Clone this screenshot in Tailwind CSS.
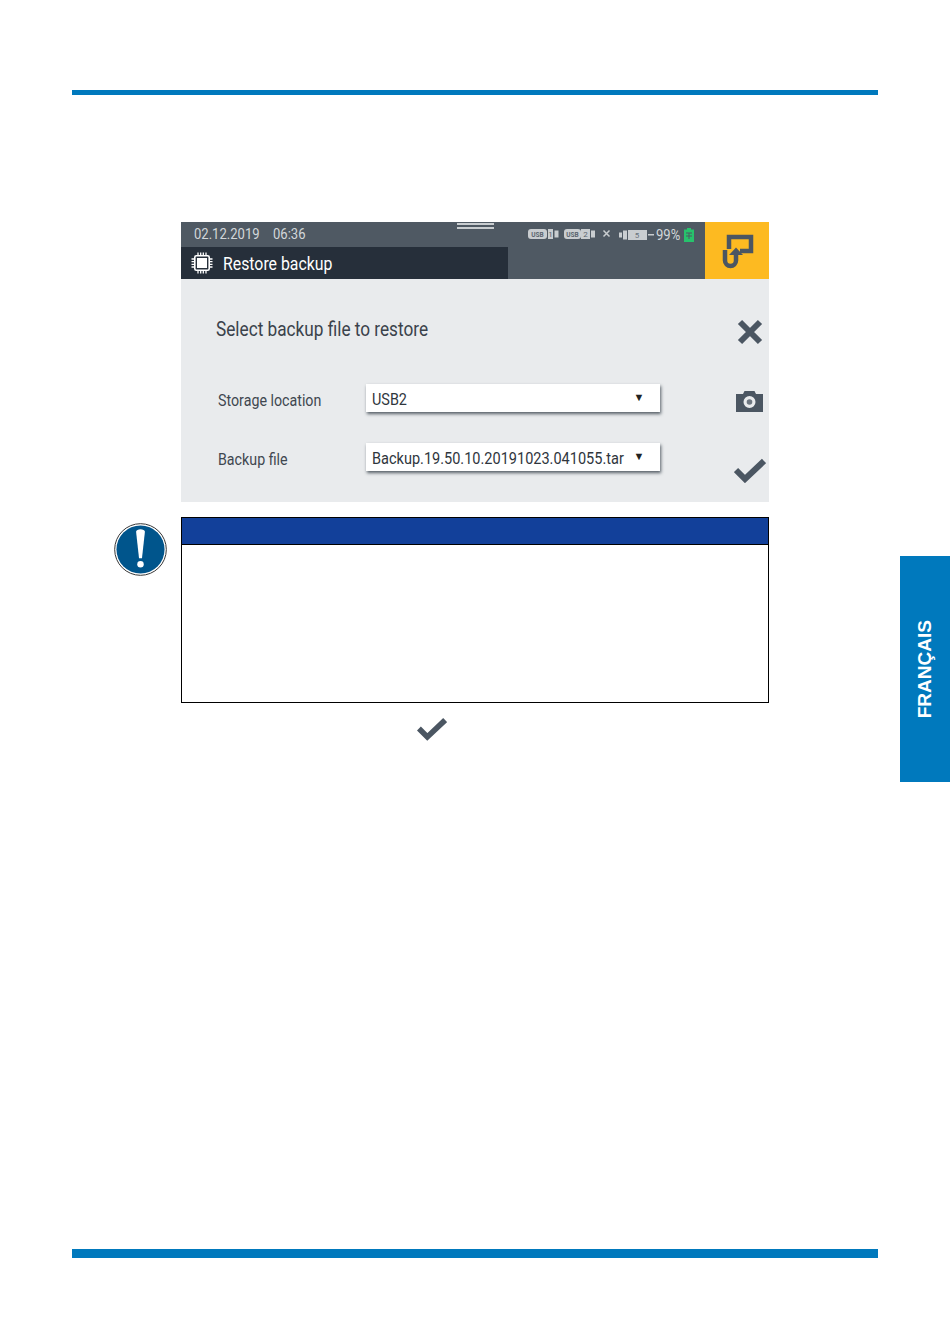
<!DOCTYPE html>
<html lang="en">
<head>
  <meta charset="UTF-8" />
  <title>Restore backup</title>
  <script src="https://cdn.jsdelivr.net/npm/@tailwindcss/browser@4"></script>
</head>
<body class="bg-white font-['Roboto',sans-serif]">
  <div class="relative h-[1344px] w-[950px] overflow-hidden flex flex-col pt-[90px] pb-[86px] px-[72px]">
    <div class="h-[5px] bg-[#0079bd]"></div>

    <div class="mx-[109px] mt-[127px]">
      <!-- device screen -->
      <div class="h-[280px] flex flex-col bg-[#e9ebed]">
        <div class="h-[57px] flex bg-[#4f5963] relative">
          <div class="w-[327px] flex flex-col">
            <div class="h-[25px] flex items-center pl-[13px] gap-[13px] text-[15px] text-[#d3d7da]">
              <span class="origin-left scale-x-[0.87] w-[66px] whitespace-nowrap">02.12.2019</span>
              <span class="origin-left scale-x-[0.87]">06:36</span>
            </div>
            <div class="h-[32px] bg-[#262f3a] flex items-center pl-[10px] text-white">
              <svg class="w-[22px] h-[22px]" viewBox="0 0 22 22" fill="none" stroke="#fff">
                <rect x="6" y="6" width="10" height="10" fill="#fff" stroke="none"/>
                <rect x="3.800" y="3.800" width="14.400" height="14.400" rx="1.500" stroke-width="1.600"/>
                <path d="M7 0.500v3M9.700 0.500v3M12.300 0.500v3M15 0.500v3M7 18.500v3M9.700 18.500v3M12.300 18.500v3M15 18.500v3M0.500 7h3M0.500 9.700h3M0.500 12.300h3M0.500 15h3M18.500 7h3M18.500 9.700h3M18.500 12.300h3M18.500 15h3" stroke-width="1.300"/>
              </svg>
              <span class="ml-[10px] text-[18px] origin-left scale-x-[0.88] whitespace-nowrap">Restore backup</span>
            </div>
          </div>
          <div class="absolute left-[276px] top-0 w-[37px] h-[7px] border-b-2 border-[#c9cdd0] flex flex-col">
            <div class="h-[2px] mt-[1px] bg-[#c9cdd0]"></div>
          </div>
          <!-- status icons -->
          <div class="flex-1 flex items-start justify-end pt-[6px] pr-[11px] gap-[5px] text-[#d3d7da]">
            <svg class="w-[31px] h-[12px]" viewBox="0 0 31 12">
              <rect x="0" y="1" width="19" height="10" rx="3" fill="#c9cdd0"/>
              <rect x="20" y="1" width="5" height="10" fill="#c9cdd0"/>
              <rect x="26.500" y="2.500" width="4" height="7" fill="#c9cdd0"/>
              <text x="9.500" y="8.500" text-anchor="middle" font-size="6.500" font-weight="700" font-family="Roboto, sans-serif" fill="#5a646e">USB</text>
              <text x="22.500" y="9" text-anchor="middle" font-size="8" font-family="Roboto, sans-serif" fill="#5a646e">1</text>
            </svg>
            <svg class="w-[31px] h-[12px]" viewBox="0 0 31 12">
              <rect x="0" y="1" width="17" height="10" rx="3" fill="#c9cdd0"/>
              <rect x="17" y="1" width="9" height="10" fill="#c9cdd0"/>
              <rect x="27" y="2.500" width="4" height="7" fill="#c9cdd0"/>
              <text x="8.500" y="8.500" text-anchor="middle" font-size="6.500" font-weight="700" font-family="Roboto, sans-serif" fill="#5a646e">USB</text>
              <text x="21.500" y="9" text-anchor="middle" font-size="8" font-family="Roboto, sans-serif" fill="#5a646e">2</text>
            </svg>
            <svg class="w-[9px] h-[12px] ml-[1.500px] mr-[3.500px]" viewBox="0 0 9 12" fill="none" stroke="#c9cdd0" stroke-width="1.500">
              <path d="M1.500 2.500l6 6M7.500 2.500l-6 6"/>
            </svg>
            <div class="flex items-center gap-[1px]">
              <svg class="w-[36px] h-[12px]" viewBox="0 0 36 12">
                <rect x="0" y="3.500" width="3" height="5" fill="#c9cdd0"/>
                <rect x="4" y="1.500" width="4" height="9" fill="#c9cdd0"/>
                <rect x="9" y="1" width="19" height="10" fill="#c9cdd0"/>
                <rect x="29" y="5" width="6" height="1.500" fill="#c9cdd0"/>
                <text x="18" y="9" text-anchor="middle" font-size="8" font-family="Roboto, sans-serif" fill="#6a737c">5</text>
              </svg>
              <span class="text-[15px] leading-[14px] origin-left scale-x-[0.87] w-[25px] whitespace-nowrap">99%</span>
              <svg class="w-[10px] h-[14px] ml-[2px]" viewBox="0 0 10 14">
                <rect x="3" y="0" width="4" height="2" fill="#27c26c"/>
                <rect x="0" y="1.500" width="10" height="12.500" fill="#27c26c"/>
                <path d="M2 5h6M2 8h6M5 5v6" stroke="#4f5963" stroke-width="1"/>
              </svg>
            </div>
          </div>
          <div class="w-[64px] bg-[#fdba21] flex items-center justify-center">
            <svg class="w-[34px] h-[36px]" viewBox="0 0 34 36" fill="none" stroke="#4b5662" stroke-width="4.500">
              <path d="M9 16V4h22v14H20"/>
              <path d="M5 17v10.500a5.500 5.500 0 0 0 11 0V20"/>
              <path d="M16 14.500l-7 7.500h14z" stroke="none" fill="#4b5662"/>
            </svg>
          </div>
        </div>

        <div class="flex-1 flex">
          <div class="flex-1 pl-[35px] pt-[38px]">
            <div class="h-[24px] flex items-center text-[20px] text-[#3a424b] origin-left scale-x-[0.86] whitespace-nowrap">Select backup file to restore</div>
            <div class="mt-[43px] flex items-center h-[28px]">
              <span class="w-[147.500px] ml-[2px] mt-[5px] text-[16px] text-[#3f4750] origin-left scale-x-[0.89] whitespace-nowrap">Storage location</span>
              <div class="w-[294px] h-[28px] bg-white shadow-[1px_2px_3px_rgba(50,60,70,0.8)] flex items-center justify-between pl-[6px] pr-[15px] text-[16px] text-[#2f363d]">
                <span class="origin-left scale-x-[0.9] mt-[3px]">USB2</span>
                <span class="text-[11px] text-[#222]">▼</span>
              </div>
            </div>
            <div class="mt-[31px] flex items-center h-[28px]">
              <span class="w-[147.500px] ml-[2px] mt-[5px] text-[16px] text-[#3f4750] origin-left scale-x-[0.89] whitespace-nowrap">Backup file</span>
              <div class="w-[294px] h-[28px] bg-white shadow-[1px_2px_3px_rgba(50,60,70,0.8)] flex items-center justify-between pl-[6.500px] pr-[15px] text-[16.500px] text-[#2f363d]">
                <span class="origin-left scale-x-[0.88] w-[250px] mt-[4px] whitespace-nowrap">Backup.19.50.10.20191023.041055.tar</span>
                <span class="text-[11px] text-[#222]">▼</span>
              </div>
            </div>
          </div>
          <div class="w-[50px] flex flex-col items-center pt-[40px] pl-[11px]">
            <svg class="w-[26px] h-[26px] ml-[1px]" viewBox="0 0 26 26" fill="none" stroke="#4b5662" stroke-width="6">
              <path d="M3 3l20 20M23 3L3 23"/>
            </svg>
            <svg class="w-[27px] h-[21px] mt-[46px]" viewBox="0 0 27 21">
              <path fill-rule="evenodd" fill="#4b5662" d="M0 3h7l1.500-3h10L20 3h7v18H0zM13.500 5a6 6 0 1 0 0 12 6 6 0 0 0 0-12z"/>
              <circle cx="13.500" cy="11" r="2.800" fill="#6d7680"/>
            </svg>
            <svg class="w-[32px] h-[26px] mt-[45px] ml-[1px]" viewBox="0 0 32 26" fill="none" stroke="#4b5662" stroke-width="6">
              <path d="M2 13l9 9L30 4"/>
            </svg>
          </div>
        </div>
      </div>

      <!-- notice box -->
      <div class="relative mt-[15px] h-[186px] border border-black">
        <div class="h-[26px] bg-[#12409a] border-b border-black box-content"></div>
        <svg class="absolute left-[-68px] top-[5px] w-[53px] h-[53px]" viewBox="0 0 54 54">
          <circle cx="27" cy="27" r="26.300" fill="#fff" stroke="#333" stroke-width="1"/>
          <circle cx="27" cy="27" r="24.500" fill="#00558c"/>
          <path d="M22.500 9c0-3.500 9-3.500 9 0L28.500 36h-3z" fill="#fff"/>
          <circle cx="27" cy="42" r="3.300" fill="#fff"/>
        </svg>
      </div>

      <div class="mt-[13px] pl-[236px]">
        <svg class="w-[30px] h-[25px]" viewBox="0 0 32 26" fill="none" stroke="#4b5662" stroke-width="6">
          <path d="M2 13l9 9L30 4"/>
        </svg>
      </div>
    </div>

    <div class="mt-auto h-[9px] bg-[#0079bd]"></div>

    <!-- language tab -->
    <div class="absolute right-0 top-[556px] w-[50px] h-[226px] bg-[#0079bd] flex items-center justify-center">
      <span class="-rotate-90 text-[19px] font-bold text-white font-['Liberation_Sans',sans-serif] whitespace-nowrap">FRANÇAIS</span>
    </div>
  </div>
</body>
</html>
